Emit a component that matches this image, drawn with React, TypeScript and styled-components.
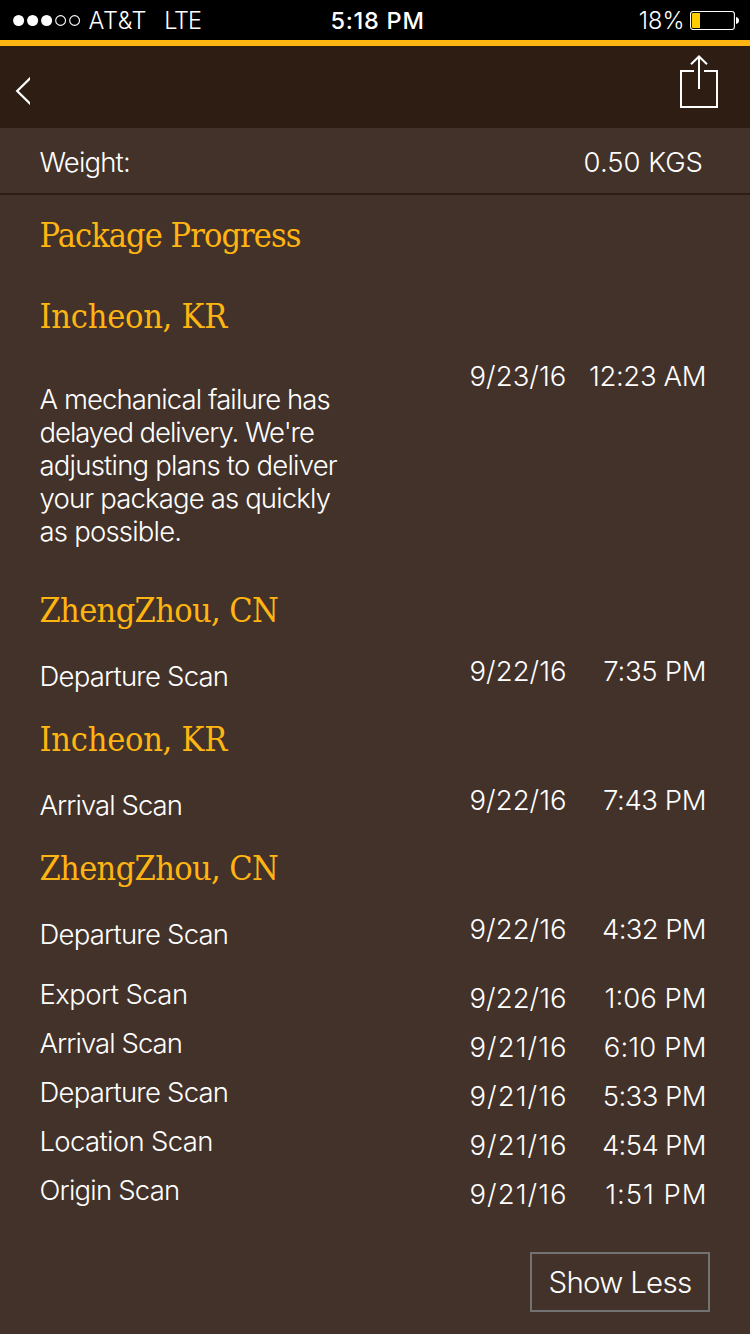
import React from "react";
import styled, { createGlobalStyle } from "styled-components";

const GlobalStyle = createGlobalStyle`
  * { box-sizing: border-box; }
  body { margin: 0; background: #433229; }
`;

const sans = `Inter, "Liberation Sans", sans-serif`;
const serif = `"DejaVu Serif Condensed", "DejaVu Serif", serif`;

const Screen = styled.div`
  width: 750px;
  height: 1334px;
  overflow: hidden;
  display: flex;
  flex-direction: column;
  background: #433229;
  color: #fff;
  font: 260 27.5px/33px ${sans};
`;

const StatusBar = styled.header`
  height: 40px;
  flex: none;
  display: grid;
  grid-template-columns: 1fr auto 1fr;
  align-items: center;
  padding: 0 11px 0 13px;
  background: #000;
  font-size: 23.5px;
  line-height: 38px;
`;

const StatusSide = styled.div<{ $end?: boolean }>`
  display: flex;
  align-items: center;
  justify-content: ${(p) => (p.$end ? "flex-end" : "flex-start")};
`;

const StatusText = styled.span<{ $track?: number; $left?: number; $right?: number; $weight?: number }>`
  padding-top: 2px;
  letter-spacing: ${(p) => p.$track ?? 0}px;
  margin-left: ${(p) => p.$left ?? 0}px;
  margin-right: ${(p) => p.$right ?? 0}px;
  font-weight: ${(p) => p.$weight ?? 300};
  white-space: nowrap;
`;

const NavBar = styled.nav`
  height: 88px;
  flex: none;
  display: flex;
  justify-content: space-between;
  align-items: flex-start;
  padding: 9px 31px 0 15px;
  background: #2e1d13;
  border-top: 6px solid #ffb511;
`;

const IconButton = styled.button<{ $top?: number }>`
  display: block;
  padding: 0;
  margin-top: ${(p) => p.$top ?? 0}px;
  border: 0;
  background: none;
  line-height: 0;
`;

const WeightRow = styled.div`
  height: 67px;
  flex: none;
  display: flex;
  justify-content: space-between;
  padding: 18px 47px 0 39.5px;
  border-bottom: 2px solid #2e1d13;
`;

const Text = styled.span<{ $track?: number }>`
  display: block;
  white-space: nowrap;
  letter-spacing: ${(p) => p.$track ?? 0}px;
  margin-right: ${(p) => -(p.$track ?? 0)}px;
`;

const Progress = styled.main`
  padding: 20px 40px 0 39.5px;
`;

const Heading = styled.h2<{ $track?: number; $after?: number }>`
  margin: 0 0 ${(p) => p.$after ?? 0}px;
  color: #ffb511;
  font: 400 34px/40px ${serif};
  letter-spacing: ${(p) => p.$track ?? 0}px;
  white-space: nowrap;
`;

const EventRow = styled.div<{ $before: number; $after: number }>`
  display: grid;
  grid-template-columns: 1fr 97px 140px;
  padding: ${(p) => p.$before}px 3.5px ${(p) => p.$after}px 0;
`;

const Description = styled.div<{ $drop: number }>`
  margin-top: ${(p) => p.$drop}px;
`;

const Stamp = styled.div<{ $end?: boolean }>`
  display: flex;
  justify-content: ${(p) => (p.$end ? "flex-end" : "flex-start")};
`;

const Actions = styled.div`
  display: flex;
  justify-content: flex-end;
`;

const LessButton = styled.button`
  width: 180px;
  height: 60px;
  padding: 0;
  display: flex;
  justify-content: center;
  align-items: center;
  border: 2px solid #727272;
  background: none;
  color: #fff;
  font: 260 29.5px/56px ${sans};
  letter-spacing: -0.75px;
`;

type Line = [text: string, track: number];
type ScanEvent = { lines: Line[]; date: Line; time: Line; before: number; drop: number; after: number };
type Stop = { place: string; track: number; events: ScanEvent[] };

const DEPARTURE: Line = ["Departure Scan", -0.79];
const ARRIVAL: Line = ["Arrival Scan", -0.95];
const SEP_21: Line = ["9/21/16", 1.05];
const SEP_22: Line = ["9/22/16", 0.05];
const SEP_23: Line = ["9/23/16", 0.05];

const single = (line: Line, date: Line, time: Line, after = 26): ScanEvent => ({
  lines: [line], date, time, before: 25, drop: 5, after,
});
const listed = (line: Line, date: Line, time: Line): ScanEvent => ({
  lines: [line], date, time, before: 4, drop: -4, after: 12,
});

const stops: Stop[] = [
  {
    place: "Incheon, KR",
    track: -0.25,
    events: [
      {
        lines: [
          ["A mechanical failure has", -0.91],
          ["delayed delivery. We're", -1.06],
          ["adjusting plans to deliver", -0.78],
          ["your package as quickly", -0.84],
          ["as possible.", -0.8],
        ],
        date: SEP_23,
        time: ["12:23 AM", -0.35],
        before: 24,
        drop: 23,
        after: 42,
      },
    ],
  },
  { place: "ZhengZhou, CN", track: -0.65, events: [single(DEPARTURE, SEP_22, ["7:35 PM", -0.3])] },
  { place: "Incheon, KR", track: -0.25, events: [single(ARRIVAL, SEP_22, ["7:43 PM", -0.4])] },
  {
    place: "ZhengZhou, CN",
    track: -0.65,
    events: [
      single(DEPARTURE, SEP_22, ["4:32 PM", -0.65], 27),
      listed(["Export Scan", -0.58], SEP_22, ["1:06 PM", 0]),
      listed(ARRIVAL, SEP_21, ["6:10 PM", 0.15]),
      listed(DEPARTURE, SEP_21, ["5:33 PM", -0.55]),
      listed(["Location Scan", -0.65], SEP_21, ["4:54 PM", -0.65]),
      { ...listed(["Origin Scan", -0.8], SEP_21, ["1:51 PM", 0.95]), after: 41 },
    ],
  },
];

const SignalDots = () => (
  <svg width="68" height="12" viewBox="0 0 68 12">
    {[0, 1, 2].map((i) => (
      <circle key={i} cx={5.6 + i * 14} cy="6.5" r="5.5" fill="#fff" />
    ))}
    {[3, 4].map((i) => (
      <circle key={i} cx={5.6 + i * 14} cy="6.5" r="4.9" fill="none" stroke="#fff" strokeWidth="1.1" />
    ))}
  </svg>
);

const Battery = () => (
  <svg width="49" height="20" viewBox="0 0 49 20">
    <rect x="0.6" y="1.5" width="43.8" height="18" rx="2.6" fill="none" stroke="#fff" strokeWidth="1.1" />
    <path d="M2 4a1 1 0 0 1 1-1h7v15H3a1 1 0 0 1-1-1z" fill="#ffcc00" />
    <path d="M46 7c2 .3 3 1.7 3 3.500s-1 3.200-3 3.500z" fill="#fff" />
  </svg>
);

const Back = () => (
  <svg width="15" height="28" viewBox="0 0 15 28">
    <path d="M17 -0.6 2.200 14 17 28.600" fill="none" stroke="#fff" strokeWidth="2.2" />
  </svg>
);

const Share = () => (
  <svg width="40" height="54" viewBox="0 0 40 54" fill="none" stroke="#fff" strokeWidth="2">
    <path d="M15 16H2v36h36V16H25" />
    <path d="M20 1.500V34M12 9.300 20 1.500l8 7.800" />
  </svg>
);

export default function App() {
  return (
    <Screen>
      <GlobalStyle />
      <StatusBar>
        <StatusSide>
          <SignalDots />
          <StatusText $left={7.5} $track={0.6}>AT&amp;T</StatusText>
          <StatusText $left={17} $track={-1.1}>LTE</StatusText>
        </StatusSide>
        <StatusText $weight={500} $track={0.75} $left={3}>5:18 PM</StatusText>
        <StatusSide $end>
          <StatusText $track={0} $right={5.5}>18%</StatusText>
          <Battery />
        </StatusSide>
      </StatusBar>
      <NavBar>
        <IconButton aria-label="Back" $top={22}>
          <Back />
        </IconButton>
        <IconButton aria-label="Share">
          <Share />
        </IconButton>
      </NavBar>
      <WeightRow>
        <Text $track={-0.85}>Weight:</Text>
        <Text $track={0}>0.50 KGS</Text>
      </WeightRow>
      <Progress>
        <Heading $track={-0.93} $after={41}>Package Progress</Heading>
        {stops.map((stop, i) => (
          <section key={i}>
            <Heading $track={stop.track}>{stop.place}</Heading>
            {stop.events.map((e, j) => (
              <EventRow key={j} $before={e.before} $after={e.after}>
                <Description $drop={e.drop}>
                  {e.lines.map(([text, track]) => (
                    <Text key={text} $track={track}>{text}</Text>
                  ))}
                </Description>
                <Stamp>
                  <Text $track={e.date[1]}>{e.date[0]}</Text>
                </Stamp>
                <Stamp $end>
                  <Text $track={e.time[1]}>{e.time[0]}</Text>
                </Stamp>
              </EventRow>
            ))}
          </section>
        ))}
        <Actions>
          <LessButton>Show Less</LessButton>
        </Actions>
      </Progress>
    </Screen>
  );
}
